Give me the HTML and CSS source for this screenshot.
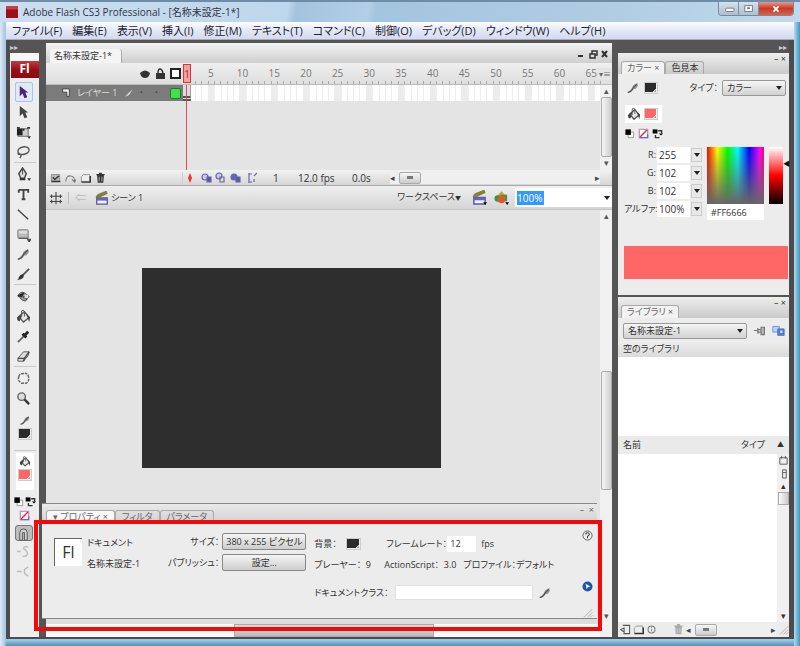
FILE: index.html
```html
<!DOCTYPE html>
<html lang="ja">
<head>
<meta charset="utf-8">
<title>Adobe Flash CS3 Professional</title>
<link rel="stylesheet" href="styles.css">
</head>
<body>
<svg class="defs" aria-hidden="true">
  <symbol id="arrow" viewBox="0 0 16 16"><path d="M4 1v11l3-3 2 5 3-1-2-5h3z"/></symbol>
  <symbol id="pencil" viewBox="0 0 16 16"><path d="M1 13l5-1 3-3 2 0 3-4-3-2-3 2-1 3-3 3z" fill="#999"/><path d="M2 13q4 0 6-5l5-5" fill="none" stroke="#555" stroke-width="1.500"/></symbol>
  <symbol id="bucket" viewBox="0 0 16 16"><path d="M3 8l6-5 5 6-6 5z" fill="#e8e8e8" stroke="#555" stroke-width="1.5"/><path d="M6 9V2q2-2 3 1v5" fill="none" stroke="#555"/><path d="M1 9l5-3-2 7q-3 0-3-4zM11 5l4 4-1 5z" fill="#444"/></symbol>
  <symbol id="swatches" viewBox="0 0 16 16"><path d="M6 6h8v8H6z" fill="#fff" stroke="#777"/><path d="M2 2h8v8H2z"/></symbol>
  <symbol id="swap" viewBox="0 0 16 16"><path d="M1 2h7v6H1z"/><path d="M9 4h5v4M5 10v4h6" fill="none" stroke="#333" stroke-width="2"/><path d="M10 8h6l-3 3z"/></symbol>
  <symbol id="none" viewBox="0 0 16 16"><path d="M2 2h12v12H2z" fill="#fff" stroke="#b9b" stroke-width="2"/><path d="M3 13L13 3" stroke="#e23" stroke-width="2"/><path d="M2 14h12V9" fill="none" stroke="#76b" stroke-width="2"/></symbol>
  <symbol id="trash" viewBox="0 0 16 16"><path d="M3 4h10l-1 11H4zM2 2h12v2H2zM6 0h4v2H6z"/><path d="M6 6v7M10 6v7" stroke="#ddd"/></symbol>
  <symbol id="folder" viewBox="0 0 16 16"><path d="M2 6l3-3h9v10H2z" fill="#eee" stroke="#777"/><path d="M2 14h13V5" fill="none" stroke="#333" stroke-width="2"/></symbol>
  <symbol id="clap" viewBox="0 0 16 16"><path d="M2 8h12v7H2z" fill="#f4f4ff" stroke="#55a" stroke-width="1.5"/><path d="M2 8h12v3H2z" fill="#66b"/><path d="M1 7l2-3 10-4 1 3-9 4z" fill="#8a8420" stroke="#554" stroke-width=".5"/></symbol>
  <symbol id="corner" viewBox="0 0 16 16"><path d="M3 15L15 3M8 15l7-7M12 15l3-3" stroke="#999"/></symbol>
  <symbol id="page" viewBox="0 0 16 16"><path d="M4 2h10v12H5M1 8l5 4V6z" fill="none" stroke="#555" stroke-width="1.5"/></symbol>
</svg>
<header class="titlebar">
  <svg class="app" viewBox="0 0 14 14"><rect width="14" height="14" fill="#9c1119"/><path d="M0 0h14v4H0z" fill="#c3414b"/></svg>
  <h1>Adobe Flash CS3 Professional - [名称未設定-1*]</h1>
  <div class="winbtns">
    <button aria-label="最小化"><svg viewBox="0 0 24 14"><rect x="8" y="6" width="10" height="4" rx="1" fill="#fff" stroke="#667"/></svg></button><button aria-label="最大化"><svg viewBox="0 0 24 14"><rect x="7" y="3" width="9" height="7" fill="#fff" stroke="#667"/><path d="M10 6h3" stroke="#667" stroke-width="2"/></svg></button><button class="close" aria-label="閉じる"><svg viewBox="0 0 24 14"><path d="M9 4l6 6m0-6l-6 6" stroke="#fff" stroke-width="2"/></svg></button>
  </div>
</header>
<nav class="menubar">
  <a href="#">ファイル(F)</a><a href="#">編集(E)</a><a href="#">表示(V)</a><a href="#">挿入(I)</a><a href="#">修正(M)</a><a href="#">テキスト(T)</a><a href="#">コマンド(C)</a><a href="#">制御(O)</a><a href="#">デバッグ(D)</a><a href="#">ウィンドウ(W)</a><a href="#">ヘルプ(H)</a>
</nav>
<main class="workspace">
  <aside class="tools">
    <div class="dockhead">▸▸</div>
    <div class="toolbody">
      <div class="fl">Fl</div>
      <button class="tool on" aria-label="選択"><svg viewBox="0 0 16 16"><use href="#arrow" fill="#51207a"/></svg></button>
      <button class="tool" aria-label="ダイレクト選択"><svg viewBox="0 0 16 16"><use href="#arrow" fill="#444"/></svg></button>
      <button class="tool" aria-label="自由変形"><svg viewBox="0 0 16 16"><path d="M2 4h11v8H2z" fill="#ccc" stroke="#666"/><path d="M1 4h6v7H1z" fill="#222"/><path d="M1 2h3v2H1zM12 2h3v2h-3zM7 4h2v2H7zM12 12h4l-2 3z" fill="#333"/></svg></button>
      <button class="tool" aria-label="なげなわ"><svg viewBox="0 0 16 16"><ellipse cx="8" cy="6" rx="6" ry="4" fill="none" stroke="#555" stroke-width="1.5" transform="rotate(-12 8 6)"/><path d="M3 8q-2 2 1 2t0 4" fill="none" stroke="#555" stroke-width="1.5"/></svg></button>
      <hr>
      <button class="tool" aria-label="ペン"><svg viewBox="0 0 16 16"><path d="M7 1l4 6-2 5H5L3 7z" fill="#ddd" stroke="#444" stroke-width="1.5"/><path d="M7 2v6" stroke="#444"/><path d="M4 12h6v2H4zM12 12h4l-2 3z" fill="#333"/></svg></button>
      <button class="tool" aria-label="テキスト"><svg viewBox="0 0 16 16"><path d="M3 3h10v3M3 6V3M8 3v10M6 13h4" fill="none" stroke="#444" stroke-width="2"/></svg></button>
      <button class="tool" aria-label="線"><svg viewBox="0 0 16 16"><path d="M2 3l11 10" stroke="#444" stroke-width="1.5"/></svg></button>
      <button class="tool" aria-label="矩形"><svg viewBox="0 0 16 16"><rect x="2" y="3" width="11" height="9" rx="1" fill="#bbb" stroke="#777"/><path d="M3 4h9v3H3z" fill="#ddd"/><path d="M3 12h10M12 13h4l-2 3z" fill="#333" stroke="#444"/></svg></button>
      <button class="tool" aria-label="鉛筆"><svg viewBox="0 0 16 16"><use href="#pencil"/></svg></button>
      <button class="tool" aria-label="ブラシ"><svg viewBox="0 0 16 16"><path d="M14 2L7 9" stroke="#555" stroke-width="2"/><path d="M8 8q1 4-3 5l-4 1q2-1 2-3 2-4 5-3z" fill="#333"/></svg></button>
      <hr>
      <button class="tool" aria-label="インクボトル"><svg viewBox="0 0 16 16"><path d="M2 7q3-5 7-3l5 4-4 5q-5-1-6-4z" fill="#999" stroke="#555"/><path d="M2 7l4 1 2-4M8 8l4 3" stroke="#333" stroke-width="2"/><path d="M9 6h4v4H9z" fill="#ddd"/></svg></button>
      <button class="tool" aria-label="バケツ"><svg viewBox="0 0 16 16"><use href="#bucket"/></svg></button>
      <button class="tool" aria-label="スポイト"><svg viewBox="0 0 16 16"><path d="M2 14l7-7" stroke="#666" stroke-width="2"/><path d="M7 5l4 4M9 7l4-4" stroke="#222" stroke-width="3"/></svg></button>
      <button class="tool" aria-label="消しゴム"><svg viewBox="0 0 16 16"><path d="M2 10l6-7h6l-1 4-5 6H2z" fill="#ddd" stroke="#555"/><path d="M8 13l1-3 5-7M2 10h7" fill="none" stroke="#444" stroke-width="1.5"/></svg></button>
      <hr>
      <button class="tool" aria-label="手のひら"><svg viewBox="0 0 16 16"><path d="M3 6q1-4 4-3 4-2 6 2 2 5-2 8H6Q1 10 3 6z" fill="#eee" stroke="#666" stroke-width="1.5" stroke-dasharray="3 1"/></svg></button>
      <button class="tool" aria-label="ズーム"><svg viewBox="0 0 16 16"><circle cx="6" cy="6" r="4" fill="#ddd" stroke="#666" stroke-width="1.5"/><path d="M9 9l5 5" stroke="#333" stroke-width="2.5"/></svg></button>
      <div class="well">
        <svg class="ic" viewBox="0 0 16 16"><use href="#pencil"/></svg>
        <button class="sw dark" aria-label="線の色"></button>
      </div>
      <hr>
      <div class="well fill">
        <svg class="ic" viewBox="0 0 16 16"><use href="#bucket"/></svg>
        <button class="sw" aria-label="塗りの色"></button>
      </div>
      <div class="minis"><svg viewBox="0 0 16 16"><use href="#swatches"/></svg><svg viewBox="0 0 16 16"><use href="#swap"/></svg></div>
      <div class="minis"><svg viewBox="0 0 16 16"><use href="#none"/></svg></div>
      <button class="tool pressed" aria-label="吸着"><svg viewBox="0 0 16 16"><path d="M4 14V6q0-4 4-4t4 4v8H9V6H7v8z" fill="#ccc" stroke="#555"/></svg></button>
      <button class="tool" aria-label="スムーズ"><svg viewBox="0 0 16 16"><path d="M1 8h4m8-5q-5-1-5 2 5 3 4 6t-5 2" fill="none" stroke="#bbb" stroke-width="1.5"/></svg></button>
      <button class="tool" aria-label="ストレート"><svg viewBox="0 0 16 16"><path d="M1 8h5m7-5l-4 3v4l4 3" fill="none" stroke="#bbb" stroke-width="1.5"/></svg></button>
    </div>
  </aside>
  <section class="doc">
    <div class="doctabs"><span class="doctab">名称未設定-1*</span><span class="docctl"><svg viewBox="0 0 32 10"><path d="M1 7h5M25 2l5 6m0-6l-5 6" stroke="#333" stroke-width="2"/><path d="M13 5h5v4h-5zM15 5V2h5v4h-2" fill="none" stroke="#333" stroke-width="1.5"/></svg></span></div>
    <div class="ruler">
      <div class="layerhead"><svg viewBox="0 0 44 14"><path d="M1 6q5-5 10 0-1 5-5 5T1 6z" fill="#333"/><path d="M17 6h9v6h-9z" fill="#333"/><path d="M19 6q0-4 2-4t3 4" fill="none" stroke="#333" stroke-width="1.5"/><rect x="32" y="2" width="9" height="9" fill="#fff" stroke="#222" stroke-width="2"/></svg></div>
      <div class="head">1</div>
      <div class="marks"><span>5</span><span>10</span><span>15</span><span>20</span><span>25</span><span>30</span><span>35</span><span>40</span><span>45</span><span>50</span><span>55</span><span>60</span><span>65</span></div>
      <span class="tlmenu">▾≡</span>
    </div>
    <div class="tracks">
      <div class="layers"><div class="layer"><svg viewBox="0 0 12 12"><path d="M2 1h8v9H7V5H2z" fill="#eee" stroke="#333"/></svg><span>レイヤー 1</span><svg viewBox="0 0 16 16"><path d="M2 14l4-5 8-7-6 9z" fill="#ddd"/></svg><i>•</i><i>•</i><b></b></div></div>
      <div class="frames"><div class="framerow"><div class="key"></div><div class="marks"><span></span><span></span><span></span><span></span><span></span><span></span><span></span><span></span><span></span><span></span><span></span><span></span><span></span></div></div></div>
      <div class="vbar"><span>▴</span><div class="thumb tl"></div><span>▾</span></div>
    </div>
    <div class="tlfoot">
      <div class="tlicons"><svg viewBox="0 0 16 16"><path d="M2 3h12v10H2z" fill="#bbb" stroke="#777"/><path d="M4 7l3 3 6-5M2 13h13" fill="none" stroke="#333" stroke-width="2"/></svg><svg viewBox="0 0 16 16"><path d="M1 13q1-9 7-8 6 0 6 8M10 10l4 4 2-4" fill="none" stroke="#777" stroke-width="1.5"/></svg><svg viewBox="0 0 16 16"><use href="#folder"/></svg><svg viewBox="0 0 16 16"><use href="#trash" fill="#333"/></svg></div>
      <div class="onion"><svg viewBox="0 0 72 12"><path d="M5 1l2 5-2 5-2-5z" fill="#e33"/><g fill="#c9c9ee" stroke="#66a" stroke-width="1.2"><circle cx="20" cy="5" r="3"/><path d="M22 5h4v5h-4z" fill="#55a"/><circle cx="34" cy="4" r="3"/><path d="M35 5h4v5h-4z" fill="none"/><circle cx="49" cy="5" r="3" fill="#66b"/><path d="M51 5h4v5h-4z" fill="#55a"/><path d="M64 1v10M64 2h3m-3 8h3M72 1l-3 3m0 3v3" fill="none"/></g></svg></div>
      <span class="f1">1</span><span class="f2">12.0 fps</span><span class="f3">0.0s</span>
      <div class="hbar"><span>◂</span><div class="grip"></div><em></em><span>▸</span></div>
    </div>
    <div class="scene">
      <svg class="ic" viewBox="0 0 16 16"><path d="M1 6h14M1 12h14M8 1v14M3 4v4m10-4v4M3 10v4m10-4v4" stroke="#444" fill="none" stroke-width="1.3"/></svg>
      <span class="back">⇐</span>
      <svg class="ic" viewBox="0 0 16 16"><use href="#clap"/></svg>
      <span class="scname">シーン 1</span>
      <button class="wsbtn">ワークスペース<small>▼</small></button>
      <svg class="ic wide" viewBox="0 0 16 16"><use href="#clap"/><path d="M12 13h4l-2 3z"/></svg>
      <svg class="ic wide" viewBox="0 0 16 16"><path d="M2 8l6-7 6 7z" fill="#d5a520"/><circle cx="4" cy="9" r="3.500" fill="#2a9d4a"/><path d="M7 5h7v7H7z" fill="#3a9a50"/><circle cx="8" cy="10" r="4" fill="#e8542a"/><path d="M12 13h4l-2 3z"/></svg>
      <div class="zoom"><input aria-label="ズーム" value="100%"><button aria-label="ズームの一覧" class="tri"></button></div>
    </div>
    <div class="stage">
      <div class="left">
        <div class="pasteboard"><div class="canvas"></div></div>
        <section class="props">
          <div class="proptabs"><span class="on">▾ プロパティ ×</span><span>フィルタ</span><span>パラメータ</span><em>–&nbsp; ×</em></div>
          <div class="propbody">
            <div class="flbox">Fl</div>
            <div class="names"><p>ドキュメント</p><p>名称未設定-1</p></div>
            <div class="settings">
              <label for="size">サイズ：</label><button id="size">380 x 255 ピクセル</button>
              <label for="pub">パブリッシュ：</label><button id="pub">設定...</button>
            </div>
            <div class="details">
              <div class="line"><label for="bg" class="bg">背景：</label><button id="bg" class="sw dark"></button><label for="fr" class="frl">フレームレート：</label><input id="fr" value="12"><span>fps</span></div>
              <div class="line"><span class="p9">プレーヤー：&nbsp; 9</span><span class="as">ActionScript：&nbsp; 3.0</span><span>プロファイル：デフォルト</span></div>
              <div class="line cls"><label for="dc">ドキュメントクラス：</label><input id="dc"><svg viewBox="0 0 16 16"><use href="#pencil"/></svg></div>
            </div>
            <div class="side"><svg viewBox="0 0 12 12"><circle cx="6" cy="6" r="5" fill="#eee" stroke="#555"/><path d="M4 5q0-2 2-2t2 2L6 7v2" fill="none" stroke="#444" stroke-width="1.2"/></svg><svg viewBox="0 0 12 12"><circle cx="6" cy="6" r="5.500" fill="#1f55a8"/><path d="M4 3l5 3-3 1-1 2z" fill="#fff"/></svg><svg viewBox="0 0 16 16"><use href="#corner"/></svg></div>
          </div>
          <div class="highlight"></div>
        </section>
        <div class="hscroll"><div></div></div>
      </div>
      <div class="vbar"><span>▴</span><div class="thumb st"></div><span>▾</span></div>
    </div>
  </section>
  <aside class="dock">
    <div class="dockhead r">▸▸</div>
    <section class="panel color">
      <div class="ptabs"><span class="on">カラー ×</span><span>色見本</span><em>– ×</em></div>
      <div class="crow"><svg class="ic" viewBox="0 0 16 16"><use href="#pencil"/></svg><button class="sw dark" aria-label="線"></button><label for="type">タイプ：</label><div class="drop"><select id="type"><option>カラー</option></select></div></div>
      <div class="crow second"><span class="lit"><svg class="ic" viewBox="0 0 16 16"><use href="#bucket"/></svg><button class="sw" aria-label="塗り"></button></span></div>
      <div class="minis l"><svg viewBox="0 0 16 16"><use href="#swatches"/></svg><svg viewBox="0 0 16 16"><use href="#none"/></svg><svg viewBox="0 0 16 16"><use href="#swap"/></svg></div>
      <div class="mixer">
        <div class="rgb">
          <label for="r">R:</label><input id="r" value="255"><button class="tri" aria-label="R"></button>
          <label for="g">G:</label><input id="g" value="102"><button class="tri" aria-label="G"></button>
          <label for="b">B:</label><input id="b" value="102"><button class="tri" aria-label="B"></button>
          <label for="a">アルファ:</label><input id="a" value="100%"><button class="tri" aria-label="アルファ"></button>
        </div>
        <div class="spec"><div class="hue"></div><input aria-label="16進" value="#FF6666"></div>
        <div class="lum"></div><span class="lumarrow">◀</span>
      </div>
      <div class="preview"></div>
    </section>
    <section class="panel library">
      <div class="ptabs"><span class="on">ライブラリ ×</span><em>– ×</em></div>
      <div class="librow"><div class="drop"><select aria-label="ライブラリ"><option>名称未設定-1</option></select></div><svg viewBox="0 0 16 16"><path d="M1 8h5M6 5v7M6 7h4M6 10h4M10 4h4v9h-4z" fill="#bbb" stroke="#777" stroke-width="1.5"/></svg><svg viewBox="0 0 16 16"><path d="M1 3h8v7H1z" fill="#bcd0ff" stroke="#68c"/><path d="M7 6h8v8H7z" fill="#4d7de0" stroke="#579"/><path d="M10 8h3v3h-3z" fill="#cde"/></svg></div>
      <div class="empty">空のライブラリ</div>
      <div class="thumbview"></div>
      <div class="list">
        <table><thead><tr><th>名前</th><th class="t">タイプ</th><th class="s">▲</th></tr></thead></table>
        <div class="listbody"><div class="lv"><svg viewBox="0 0 12 12"><path d="M2 3h8v7H2zM4 1v3m4-3v3" fill="none" stroke="#555"/></svg><svg viewBox="0 0 12 12"><path d="M5 2h4v9H5zM5 5h4" fill="none" stroke="#555"/></svg><span>▴</span><div></div><em></em><span>▾</span></div></div>
      </div>
      <div class="libfoot"><svg viewBox="0 0 16 16"><use href="#page"/></svg><svg viewBox="0 0 16 16"><use href="#folder"/></svg><svg viewBox="0 0 16 16"><circle cx="8" cy="8" r="5" fill="#eee" stroke="#777" stroke-width="1.500"/><path d="M8 7v4M8 4v2" stroke="#666"/></svg><svg class="tr" viewBox="0 0 16 16"><use href="#trash" fill="#aaa"/></svg><div class="hbar"><span>◂</span><div class="grip"></div><em></em><span>▸</span></div><svg viewBox="0 0 16 16"><use href="#corner"/></svg></div>
    </section>
  </aside>
</main>
</body>
</html>
```
FILE: styles.css
```css
* { box-sizing: border-box; }
body {
  margin: 0; min-height: 100vh; display: grid; grid-template-rows: 22px 18px 1fr;
  padding: 0 6px 8px; color: #333;
  font: 9px/12px "Open Sans", "Noto Sans CJK JP", sans-serif;
  font-feature-settings: "palt";
  background: linear-gradient(90deg, #dcebf8, #abc6e2 5px, transparent 6px, transparent calc(100% - 6px), #b5d9ef calc(100% - 6px), #3f97bd),
    linear-gradient(0deg, #3e8aa8, #9cc8e8 7px, #abc8e2 9px);
}
.defs { position: absolute; width: 0; height: 0; }
svg { display: block; flex: none; }
p, h1 { margin: 0; font: inherit; }
button, input, select { font: inherit; color: inherit; margin: 0; padding: 0; border: 0; border-radius: 0; background: none; min-width: 0; }
em, i { font-style: normal; }
.ic { width: 14px; height: 14px; }

.titlebar {
  display: flex; align-items: center; margin: 0 -6px; padding: 0 6px;
  background: linear-gradient(100deg, #cbdeef, #bdd7ec 36%, #a4c3de 37%, #b3cfe7 46%, #a4c5df 47%, #b0cce3 75%, #c0d9ee);
  border-top: 2px solid #6f8ca6;
}
.app { width: 12px; height: 12px; margin-right: 5px; }
.titlebar h1 { flex: 1; font-size: 10px; white-space: nowrap; color: #334; }
.winbtns { display: flex; align-self: flex-start; border: 1px solid #7788a0; border-top: 0; border-radius: 0 0 4px 4px; overflow: hidden; }
.winbtns button { width: 20px; height: 13px; background: linear-gradient(#d5e1ed, #aebfd1); border-right: 1px solid #8090a6; }
.winbtns button svg { width: 20px; height: 12px; }
.winbtns .close { width: 34px; background: linear-gradient(#e69a8c, #c63b27 50%, #dd6048); border: 0; }
.winbtns .close svg { width: 34px; }

.menubar { display: flex; align-items: center; gap: 10px; padding-left: 6px; background: linear-gradient(#fdfdff, #e3e8f6 50%, #d3dbee); border-bottom: 1px solid #aab; }
.menubar a { color: #223; text-decoration: none; font-size: 11px; white-space: nowrap; }

.workspace { display: flex; min-height: 0; background: #555; border: solid #4c4c4c; border-width: 0 5px 2px 4px; }
.dockhead { height: 13px; flex: none; color: #ccc; font-size: 8px; line-height: 13px; }
.dockhead.r { text-align: right; padding-right: 2px; }

.tools { width: 29px; flex: none; display: flex; flex-direction: column; }
.toolbody { flex: 1; background: #ededed; border-top: 8px solid #f7f7f7; display: flex; flex-direction: column; align-items: center; }
.fl { width: 28px; height: 17px; margin-bottom: 4px; background: linear-gradient(#c53a42, #980f18 50%, #8a0b13); color: #fff; font: bold 12px/16px "Open Sans", sans-serif; text-align: center; }
.tool { width: 18px; height: 20px; padding: 3px 1px; flex: none; margin-right: 2px; }
.tool svg { width: 15px; height: 15px; }
.tool.on { border: 1px solid #aac3e6; background: #dfe9f8; padding: 1px 0; border-radius: 2px; }
.tool.pressed { border: 1px solid #777; background: #bdbdbd; border-radius: 3px; padding: 1px 0; height: 16px; margin-top: 3px; }
.tools hr { width: 22px; margin: 0 0 1px; border: 0; border-top: 1px solid #c9c9c9; }
.well { display: flex; flex-direction: column; align-items: center; gap: 1px; width: 18px; padding: 6px 0 10px; }
.well .ic { width: 12px; height: 13px; }
.well.fill { background: #fff; padding: 2px 0 9px; margin-top: 1px; }
.well.fill + .minis { margin-top: 6px; }
.sw { width: 14px; height: 12px; border: 1px solid #ccc; background: #ff6666; box-shadow: inset -1px -1px #eee; flex: none; background-image: linear-gradient(135deg, transparent 76%, #ddd 77%, #333); }
.sw.dark { background-color: #2b2b2b; }
.minis { display: flex; height: 12px; margin-top: 2px; gap: 1px; }
.minis svg { width: 11px; height: 11px; }

.doc { flex: 1; min-width: 0; margin: 3px 6px 0 7px; display: flex; flex-direction: column; background: #e4e4e4; }
.doctabs { display: flex; height: 20px; flex: none; padding: 6px 3px 0 4px; justify-content: space-between; background: linear-gradient(#f2f2f2, #cfcfcf); }
.doctab { padding: 0 9px 0 4px; line-height: 13px; font-size: 9px; background: #f4f4f4; border-right: 1px solid #aaa; border-radius: 3px 3px 0 0; }
.docctl svg { width: 32px; height: 10px; }
.ruler { position: relative; display: flex; height: 22px; flex: none; background: linear-gradient(#efefef, #dedede); border-bottom: 1px solid #bbb; }
.layerhead { width: 137px; flex: none; display: flex; align-items: center; justify-content: flex-end; }
.layerhead svg { width: 44px; height: 14px; }
.head { width: 8px; margin: 1px 4px 1px 0; flex: none; border: 1px solid #d33; background: #f5a0a0; color: #a33; font-size: 10px; line-height: 18px; text-align: center; }
.marks { flex: 1; display: grid; grid-template-columns: repeat(13, 1fr); margin-right: 5px; font-size: 10px; line-height: 20px; text-align: center; color: #777; }
.ruler .marks span { background: repeating-linear-gradient(90deg, #aaa 0 1px, transparent 1px 20%) bottom / 100% 3px no-repeat; }
.tlmenu { position: absolute; right: 1px; top: 5px; padding-left: 2px; background: #e4e4e4; color: #666; font-size: 8px; }
.tracks { display: flex; height: 85px; flex: none; }
.layers { width: 137px; flex: none; }
.layer { height: 16px; display: flex; align-items: center; gap: 6px; padding: 0 2px 0 15px; background: #7b7b7b; color: #ddd; }
.layer svg { width: 10px; height: 10px; }
.layer span { flex: 1; white-space: nowrap; }
.layer i { width: 9px; color: #444; font-size: 7px; }
.layer b { width: 11px; height: 11px; background: #3fe24a; border: 1px solid #237a28; border-radius: 2px; }
.frames { flex: 1; min-width: 0; position: relative; }
.frames::before { content: ""; position: absolute; left: 3px; top: 0; bottom: 0; width: 1px; background: #e14b4b; }
.framerow { display: flex; height: 16px; background: #fff; }
.framerow .marks { margin-right: -7px; overflow: hidden; }
.framerow .marks span { background: linear-gradient(90deg, transparent 40%, #ececec 40% 60%, transparent 60%), repeating-linear-gradient(90deg, #eee 0 1px, transparent 1px 20%); }
.key { width: 8px; margin-right: 4px; flex: none; background: #ddd; border-right: 1px solid #999; border-bottom: 5px double #555; }
.vbar { position: relative; width: 12px; flex: none; display: flex; flex-direction: column; align-items: center; background: #f0f0f0; color: #555; font-size: 9px; }
.thumb { width: 11px; border: 1px solid #aaa; border-radius: 2px; background: linear-gradient(90deg, #f6f6f6, #cfcfcf); }
.tl { height: 60px; }
.tlfoot { display: flex; align-items: center; height: 16px; flex: none; background: linear-gradient(#f2f2f2, #d6d6d6); border-bottom: 1px solid #aaa; font-size: 10px; white-space: nowrap; }
.tlicons { width: 137px; flex: none; display: flex; gap: 4px; padding-left: 4px; border-right: 1px solid #ccc; }
.tlicons svg { width: 11px; height: 12px; }
.onion svg { width: 72px; height: 12px; margin-left: 2px; }
.f1 { width: 25px; margin-left: 16px; }
.f2 { width: 54px; }
.f3 { width: 38px; }
.hbar { flex: 1; display: flex; align-items: center; background: #efefef; color: #444; font-size: 9px; }
.hbar em { flex: 1; }
.tlfoot .hbar { margin-right: 12px; }
.grip { width: 22px; height: 12px; margin-left: 4px; border: 1px solid #aaa; border-radius: 2px; background: linear-gradient(#777, #777) center / 6px 3px no-repeat, linear-gradient(#f6f6f6, #cdcdcd); }
.scene { display: flex; align-items: center; height: 24px; flex: none; padding-left: 3px; background: linear-gradient(#efefef, #d5d5d5); border-bottom: 1px solid #c4c4c4; white-space: nowrap; }
.back { margin: 0 9px 0 5px; padding-left: 6px; border-left: 1px solid #bbb; color: #bbb; font-size: 11px; }
.scname { flex: 1; margin-left: 2px; font-size: 9px; }
.wsbtn { margin-right: 10px; font-size: 9px; }
.wsbtn small { font-size: 6px; }
.ic.wide { width: 17px; height: 15px; margin-right: 5px; }
.zoom { display: flex; align-items: center; width: 97px; height: 19px; padding-left: 2px; background: #fff; }
.zoom input { width: 27px; height: 14px; background: #3399ff; color: #fff; font-size: 10px; margin-right: auto; }
.tri { width: 11px; height: 14px; border: 1px solid #ccc; background: #e8e8e8; display: grid; place-items: center; }
.tri::after, .drop::after { content: ""; border: 3px solid transparent; border-top: 4px solid #222; border-bottom: 0; }
.zoom .tri { border: 0; background: none; }

.stage { flex: 1; display: flex; min-height: 0; }
.left { flex: 1; min-width: 0; display: flex; flex-direction: column; }
.pasteboard { flex: 1; padding: 58px 159px 35px 96px; display: flex; }
.canvas { flex: 1; min-height: 200px; background: #2e2e2e; }
.stage .vbar { justify-content: flex-start; padding-bottom: 15px; }
.st { height: 119px; margin: auto 0 132px; }
.stage .vbar span:last-child { position: absolute; bottom: 15px; }
.hscroll { display: flex; height: 18px; flex: none; padding-top: 5px; background: linear-gradient(#ddd 5px, #fafafa 5px); }
.hscroll div { width: 36%; margin-left: 34%; background: linear-gradient(#ddd, #bbb); border: 1px solid #aaa; }
.props { position: relative; z-index: 1; flex: none; margin: 0 3px 0 -4px; background: #ececec; border: solid #888; border-width: 1px 0; }
.proptabs { display: flex; height: 20px; padding: 6px 3px 0 4px; background: linear-gradient(#eaeaea, #cfcfcf); line-height: 12px; color: #666; white-space: nowrap; }
.proptabs span { padding: 0 6px; border: 1px solid #aaa; border-bottom: 0; border-radius: 3px 3px 0 0; }
.proptabs .on { background: #f8f8f8; }
.proptabs em { margin: -6px 0 0 auto; }
.propbody { display: flex; height: 94px; padding: 13px 4px 0 12px; white-space: nowrap; }
.flbox { width: 28px; height: 28px; margin-top: 1px; border: solid #666; border-width: 1px 0 0 1px; background: #fff; font: 16px/27px "Open Sans", sans-serif; text-align: center; }
.names { width: 86px; padding-left: 5px; line-height: 21px; margin-top: -5px; }
.settings { display: grid; grid-template-columns: 1fr 84px; grid-auto-rows: 17px; gap: 4px 3px; align-items: center; text-align: right; align-content: start; margin-top: -4px; flex: 0 0 137px; }
.settings label { justify-self: end; }
.settings button { height: 17px; border: 1px solid #888; border-radius: 2px; background: linear-gradient(#f5f5f5, #cdcdcd); text-align: center; }
.details { flex: 1; padding-left: 8px; margin-top: -4px; }
.line { display: flex; align-items: center; height: 21px; }
.line .bg { width: 32px; }
.line .sw { width: 15px; }
.frl { width: 61px; margin-left: 25px; }
#fr { width: 29px; height: 16px; padding-left: 3px; margin-right: 5px; background: #fff; }
.p9 { width: 70px; }
.as { width: 79px; }
.cls { margin-top: 7px; }
.cls label { width: 81px; }
.cls input { flex: 0 1 138px; height: 15px; background: #fff; border: 1px solid #e0e0e0; }
.cls svg { width: 14px; height: 14px; margin-left: 5px; }
.side { display: flex; flex-direction: column; align-items: flex-end; margin-top: -7px; }
.side svg { width: 11px; height: 11px; margin-bottom: 40px; }
.side svg + svg { margin-bottom: 15px; }
.highlight { position: absolute; inset: 16px -5px -13px -8px; border: 4px solid #f40808; }

.dock { width: 171px; flex: none; display: flex; flex-direction: column; }
.panel { background: #ececec; display: flex; flex-direction: column; }
.color { height: 242px; flex: none; }
.library { flex: 1; margin-top: 2px; }
.ptabs { display: flex; height: 21px; flex: none; padding: 8px 3px 0; background: linear-gradient(#eee, #cacaca); white-space: nowrap; }
.ptabs span { padding: 0 5px; border: 1px solid #aaa; border-bottom: 0; border-radius: 3px 3px 0 0; }
.ptabs .on { background: #f2f2f2; color: #666; }
.ptabs em { margin: -8px 0 0 auto; }
.crow { display: flex; align-items: center; gap: 4px; padding: 5px 3px 0 8px; height: 22px; }
.crow label { margin-left: auto; }
.drop { position: relative; width: 64px; flex: none; }
.drop select { appearance: none; display: block; width: 100%; height: 16px; padding-left: 4px; border: 1px solid #999; border-radius: 2px; background: linear-gradient(#f5f5f5, #d2d2d2); }
.drop::after { position: absolute; right: 4px; top: 6px; }
.crow.second { height: 27px; padding: 9px 7px 0; }
.lit { display: flex; align-items: center; gap: 3px; width: 37px; height: 18px; padding-left: 2px; background: #fff; }
.minis.l { gap: 3px; padding-left: 6px; margin-top: 5px; }
.mixer { display: flex; margin: 7px 0 0; padding-left: 6px; position: relative; }
.rgb { display: grid; grid-template-columns: 32px 33px 11px; grid-auto-rows: 16px; gap: 2px 1px; align-items: center; }
.rgb label { text-align: right; font-size: 9px; white-space: nowrap; }
.rgb input { width: 33px; height: 16px; padding-left: 2px; background: #fff; font-size: 10px; }
.spec { width: 57px; margin: 0 5px; }
.hue { height: 57px; background: linear-gradient(transparent, #666), linear-gradient(90deg, #f00, #ff0 18%, #0f0 36%, #0ff 54%, #00f 74%, #f0f 92%, #f06); }
.spec input { display: block; width: 100%; height: 16px; padding-left: 4px; background: #fff; }
.lum { width: 14px; height: 57px; background: linear-gradient(#fff, #f00 50%, #000); }
.lumarrow { position: absolute; right: -1px; top: 11px; font-size: 7px; color: #111; }
.preview { height: 33px; margin: 26px 1px 0 6px; background: #ff6666; flex: none; }
.librow { display: flex; align-items: center; gap: 5px; height: 23px; padding: 2px 4px 0 5px; justify-content: space-between; }
.librow .drop { width: 124px; }
.librow svg { width: 13px; height: 13px; }
.empty { height: 16px; padding: 2px 5px; font-size: 9px; background: linear-gradient(#eee, #dadada); }
.thumbview { height: 79px; background: #fff; }
.list { flex: 1; display: flex; flex-direction: column; }
table { width: 100%; height: 18px; border-collapse: collapse; background: #eaeaea; }
th { padding: 0 5px; font-weight: 400; text-align: left; }
.t { width: 36px; padding: 0; }
.s { width: 12px; padding: 0; font-size: 7px; }
.listbody { flex: 1; display: flex; justify-content: flex-end; background: #fff; }
.lv { display: flex; flex-direction: column; align-items: center; width: 12px; background: #f0f0f0; }
.lv svg { width: 11px; height: 13px; }
.lv div { width: 11px; height: 13px; border: 1px solid #aaa; background: linear-gradient(90deg, #fafafa, #ccc); }
.lv em { flex: 1; }
.libfoot { display: flex; align-items: center; height: 15px; flex: none; padding-left: 2px; gap: 2px; }
.libfoot svg { width: 11px; height: 11px; }
.libfoot .tr { margin-left: 14px; }
```
